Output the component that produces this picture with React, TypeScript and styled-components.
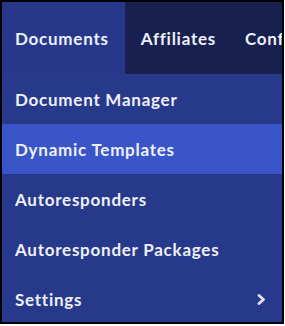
import React from 'react';
import styled, { createGlobalStyle } from 'styled-components';

const GlobalStyle = createGlobalStyle`
  html, body {
    margin: 0;
    padding: 0;
    background: #ffffff;
  }
  * {
    box-sizing: border-box;
  }
`;

const S = {
  Frame: styled.div`
    width: 284px;
    height: 324px;
    border: 2px solid #000000;
    background: #27398a;
    overflow: hidden;
    font-family: Lato, 'Noto Sans', sans-serif;
    font-weight: 700;
    letter-spacing: 0.75px;
    color: #eef0fa;
  `,
  TopBar: styled.nav`
    display: flex;
    height: 72px;
    background: #17204f;
    white-space: nowrap;
  `,
  Tab: styled.div<{ $active?: boolean }>`
    display: flex;
    align-items: center;
    padding: 1px 16px 0 13px;
    font-size: 17px;
    background: ${(p) => (p.$active ? '#27388a' : 'transparent')};
    &:not(:first-child) {
      padding: 1px 13px 0 16px;
    }
  `,
  Menu: styled.ul`
    list-style: none;
    margin: 0;
    padding: 0;
  `,
  Item: styled.li<{ $active?: boolean }>`
    display: flex;
    align-items: center;
    justify-content: space-between;
    height: 50px;
    padding: 0 16px 0 13px;
    font-size: 17px;
    background: ${(p) => (p.$active ? '#3955c8' : 'transparent')};
  `,
  Chevron: styled.svg`
    width: 9px;
    height: 11px;
  `,
};

const items = [
  { label: 'Document Manager' },
  { label: 'Dynamic Templates', active: true },
  { label: 'Autoresponders' },
  { label: 'Autoresponder Packages' },
  { label: 'Settings', sub: true },
];

export default function App() {
  return (
    <>
      <GlobalStyle />
      <S.Frame>
        <S.TopBar>
          <S.Tab $active>Documents</S.Tab>
          <S.Tab>Affiliates</S.Tab>
          <S.Tab>Configuration</S.Tab>
        </S.TopBar>
        <S.Menu>
          {items.map((item) => (
            <S.Item key={item.label} $active={item.active}>
              <span>{item.label}</span>
              {item.sub && (
                <S.Chevron viewBox="0 0 9 11">
                  <path d="M2 1.5 L6.5 5.5 L2 9.5" fill="none" stroke="#dfe3f5" strokeWidth="2.8" strokeLinecap="round" strokeLinejoin="round" />
                </S.Chevron>
              )}
            </S.Item>
          ))}
        </S.Menu>
      </S.Frame>
    </>
  );
}
